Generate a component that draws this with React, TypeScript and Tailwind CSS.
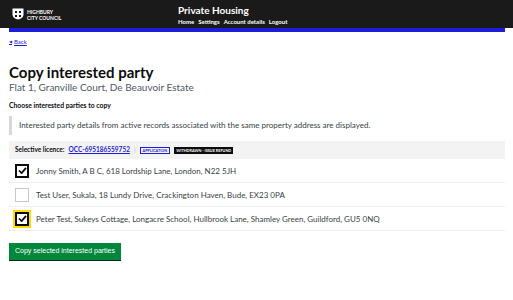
import React from 'react';

const parties = [
  { name: 'Jonny Smith, A B C, 618 Lordship Lane, London, N22 5JH', checked: true, focus: false },
  { name: 'Test User, Sukala, 18 Lundy Drive, Crackington Haven, Bude, EX23 0PA', checked: false, focus: false },
  { name: 'Peter Test, Sukeys Cottage, Longacre School, Hullbrook Lane, Shamley Green, Guildford, GU5 0NQ', checked: true, focus: true },
];

const Crest = () => (
  <svg width="12" height="12" viewBox="0 0 12 12">
    <path d="M0.5 0.5 H11.5 V6.5 C11.5 9.5 8.5 11 6 11.5 C3.5 11 0.5 9.5 0.5 6.5 Z" fill="#fff" />
    <path d="M3 3 L5 5 M5 3 L3 5 M7 3 L9 5 M9 3 L7 5 M3 7 L5 9 M5 7 L3 9 M7 7 L9 9 M9 7 L7 9" stroke="#1a1a1a" strokeWidth="1" />
  </svg>
);

const Tick = () => (
  <svg width="9" height="7" viewBox="0 0 10 8">
    <path d="M1 4 L4 7 L9 1" fill="none" stroke="#0b0c0c" strokeWidth="2" />
  </svg>
);

const App: React.FC = () => {
  return (
    <div className="w-[513px] h-[300px] bg-white overflow-hidden font-['Lato','Noto_Sans',sans-serif] text-[#0b0c0c]">
      <header className="bg-[#1a1a1a] h-[28px] flex items-start">
        <div className="w-[178px] pl-[12px] pt-[8px] flex items-start gap-[3px]">
          <Crest />
          <div className="text-white text-[5px] leading-[6px] font-bold pt-[1px]">
            <div>HIGHBURY</div>
            <div>CITY COUNCIL</div>
          </div>
        </div>
        <div className="pt-[4px]">
          <div className="text-white font-bold text-[10px] leading-[13px]">Private Housing</div>
          <div className="flex gap-[4px] text-white font-bold text-[6px] leading-[8px] mt-[1px]">
            <span>Home</span>
            <span>Settings</span>
            <span>Account details</span>
            <span>Logout</span>
          </div>
        </div>
      </header>
      <div className="ml-[9px] mr-[8px]">
        <div className="h-[4px] bg-[#1d1dd6]" />
        <a className="flex w-fit items-center gap-[2px] mt-[6px] text-[#1d1dd6] text-[6px] leading-[8px] underline">
          <span className="text-[4px]">◀</span>
          <span>Back</span>
        </a>
        <h1 className="mt-[17px] font-bold text-[15px] leading-[18px]">Copy interested party</h1>
        <div className="text-[#505a5f] text-[10px] leading-[13px]">Flat 1, Granville Court, De Beauvoir Estate</div>
        <div className="mt-[7px] font-bold text-[6.8px] leading-[9px]">Choose interested parties to copy</div>
        <div className="mt-[6px] border-l-[3px] border-[#d8d8d8] pl-[7px] py-[5px] text-[8px] leading-[9px] text-[#383f43]">
          Interested party details from active records associated with the same property address are displayed.
        </div>
        <div className="mt-[6px] bg-[#f3f3f3] h-[18px] flex items-center pl-[6px] gap-[4px] text-[6.5px]">
          <span className="font-bold">Selective licence:</span>
          <span className="font-bold text-[#1d1dd6] underline">OCC-695186559752</span>
          <span className="text-[#b1b4b6]">|</span>
          <span className="border border-[#1d1dd6] text-[#1d1dd6] text-[3.8px] font-bold px-[2px] leading-[5px]">APPLICATION</span>
          <span className="bg-[#0b0c0c] text-white text-[3.8px] font-bold px-[2px] leading-[7px]">WITHDRAWN - ISSUE REFUND</span>
        </div>
        <div>
          {parties.map((p) => (
            <div key={p.name} className="flex items-center h-[24px] border-b border-[#f0f0f0] pl-[6px]">
              <div
                className={`w-[14px] h-[14px] shrink-0 flex items-center justify-center bg-white ${
                  p.focus
                    ? 'border-2 border-[#0b0c0c] outline outline-2 outline-[#ffdd00]'
                    : p.checked
                      ? 'border-2 border-[#0b0c0c]'
                      : 'border border-[#c8c8c8]'
                }`}
              >
                {p.checked && <Tick />}
              </div>
              <span className="ml-[7px] text-[8px] text-[#383f43] whitespace-nowrap">{p.name}</span>
            </div>
          ))}
        </div>
        <button className="mt-[12px] bg-[#00873c] text-white font-['Liberation_Sans',sans-serif] text-[7px] h-[17px] px-[6px] shadow-[0_1px_0_#002d18]">
          Copy selected interested parties
        </button>
      </div>
    </div>
  );
};

export default App;
